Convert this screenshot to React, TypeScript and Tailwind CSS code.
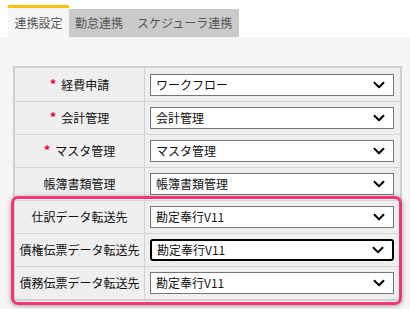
import { ChevronDown } from "lucide-react";

const rows = [
  { label: "経費申請", required: true, value: "ワークフロー" },
  { label: "会計管理", required: true, value: "会計管理" },
  { label: "マスタ管理", required: true, value: "マスタ管理" },
  { label: "帳簿書類管理", required: false, value: "帳簿書類管理" },
  { label: "仕訳データ転送先", required: false, value: "勘定奉行V11" },
  { label: "債権伝票データ転送先", required: false, value: "勘定奉行V11", focused: true },
  { label: "債務伝票データ転送先", required: false, value: "勘定奉行V11" },
];

export default function App() {
  return (
    <div
      className="h-[309px] w-[410px] overflow-hidden bg-white text-[12px] text-[#111]"
      style={{ fontFamily: '"Noto Sans CJK JP", "Noto Sans", sans-serif' }}
    >
      {/* Tabs */}
      <div className="flex h-[37px] items-end pl-2 pt-[5px]">
        <div className="flex h-[32px] w-[61px] flex-col bg-[#f5f5f5]">
          <div className="h-[3px] bg-[#ffc000]" />
          <div className="flex flex-1 items-center justify-center text-[#555]">連携設定</div>
        </div>
        <div className="flex h-[28px] items-center bg-[#cacaca] text-[#555]">
          <span className="pl-[6px] pr-[14px]">勤怠連携</span>
          <span className="pr-[7px]">スケジューラ連携</span>
        </div>
      </div>

      {/* Content */}
      <div className="relative h-[272px] bg-[#f5f5f5] pl-[13px] pt-[29px]">
        <div className="w-[389px] border-2 border-[#cfcfcf] bg-[#efefef]">
          {rows.map((row, i) => (
            <div
              key={row.label}
              className={`grid h-[33px] grid-cols-[130px_1fr] ${i > 0 ? "border-t border-[#d2d2d2]" : ""}`}
            >
              <div className="flex items-center justify-center border-r border-[#d2d2d2]">
                {row.required && (
                  <span className="mr-[5px] mt-[-3px] text-[13px] font-bold leading-none text-[#f0003c]">*</span>
                )}
                <span>{row.label}</span>
              </div>
              <div className="flex items-center pl-[5px] pr-[6px]">
                <div
                  className={`flex h-[22px] w-full items-center justify-between bg-white pl-[5px] pr-[5px] ${
                    row.focused ? "rounded-[3px] border-2 border-black pl-[4px] pr-[4px]" : "border border-[#767676]"
                  }`}
                >
                  <span>{row.value}</span>
                  <ChevronDown className="h-[18px] w-[18px] text-black" strokeWidth={2.6} />
                </div>
              </div>
            </div>
          ))}
        </div>

        {/* Highlight annotation */}
        <div className="absolute left-[11px] top-[159px] h-[109px] w-[391px] rounded-[7px] border-[3px] border-[#f43572] shadow-[0_1px_5px_rgba(0,0,0,0.35)]" />
      </div>
    </div>
  );
}
